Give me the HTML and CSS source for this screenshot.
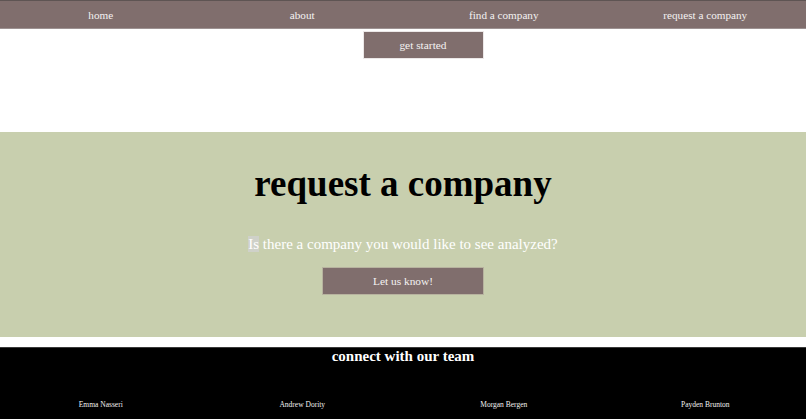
FILE: index.html
```html
<!DOCTYPE html>
<html lang="en">
<head>
<meta charset="utf-8">
<title>request a company</title>
<link rel="stylesheet" href="styles.css">
</head>
<body>
<nav class="nav">
  <a class="nav-link" href="#">home</a>
  <a class="nav-link" href="#">about</a>
  <a class="nav-link" href="#">find a company</a>
  <a class="nav-link" href="#">request a company</a>
</nav>
<section class="intro">
  <button class="btn btn-start" type="button">get started</button>
</section>
<section class="request">
  <h1 class="request-title">request a company</h1>
  <p class="request-text"><span class="sel">Is</span> there a company you would like to see analyzed?</p>
  <button class="btn btn-know" type="button">Let us know!</button>
</section>
<footer class="footer">
  <h2 class="footer-title">connect with our team</h2>
  <div class="team">
    <span class="member">Emma Nasseri</span>
    <span class="member">Andrew Dority</span>
    <span class="member">Morgan Bergen</span>
    <span class="member">Payden Brunton</span>
  </div>
</footer>
</body>
</html>
```
FILE: styles.css
```css
html, body {
  margin: 0;
  padding: 0;
  background: #ffffff;
  font-family: "Liberation Serif", "Times New Roman", serif;
}

.nav {
  display: grid;
  grid-template-columns: repeat(4, 1fr);
  align-items: center;
  height: 27px;
  background: #806e6d;
  border-top: 1px solid #5e5453;
  border-bottom: 1px solid #9d9292;
}

.nav-link {
  text-align: center;
  color: #f4f2f2;
  text-decoration: none;
  font-size: 11.2px;
}

.btn {
  background: #806e6d;
  color: #f4f2f2;
  font-family: inherit;
  font-size: 11.4px;
  height: 28px;
  padding: 0;
  cursor: pointer;
  box-sizing: border-box;
}

.intro {
  display: flex;
  justify-content: center;
  align-items: flex-start;
  padding: 2px 0 0 40px;
  height: 103px;
  box-sizing: border-box;
}

.btn-start {
  width: 121px;
  border: 1px solid #ece8e8;
}

.request {
  display: flex;
  flex-direction: column;
  align-items: center;
  background: #c8cfae;
  padding: 30px 0 42px;
  height: 205px;
  box-sizing: border-box;
}

.request-title {
  margin: 0;
  font-size: 37px;
  font-weight: bold;
  color: #000000;
}

.request-text {
  margin: 31px 0 14px;
  font-size: 15px;
  color: #ffffff;
}

.sel {
  background: #cfd1c9;
}

.btn-know {
  width: 162px;
  border: 1px solid #b7b39f;
}

.footer {
  margin-top: 10px;
  background: #000000;
  border-top: 1px solid #3a3a3a;
  height: 80px;
  color: #ffffff;
}

.footer-title {
  margin: 0;
  text-align: center;
  font-size: 15px;
  font-weight: bold;
}

.team {
  display: grid;
  grid-template-columns: repeat(4, 1fr);
  margin-top: 35px;
}

.member {
  text-align: center;
  font-size: 7.5px;
  color: #f2f2f2;
}
```
